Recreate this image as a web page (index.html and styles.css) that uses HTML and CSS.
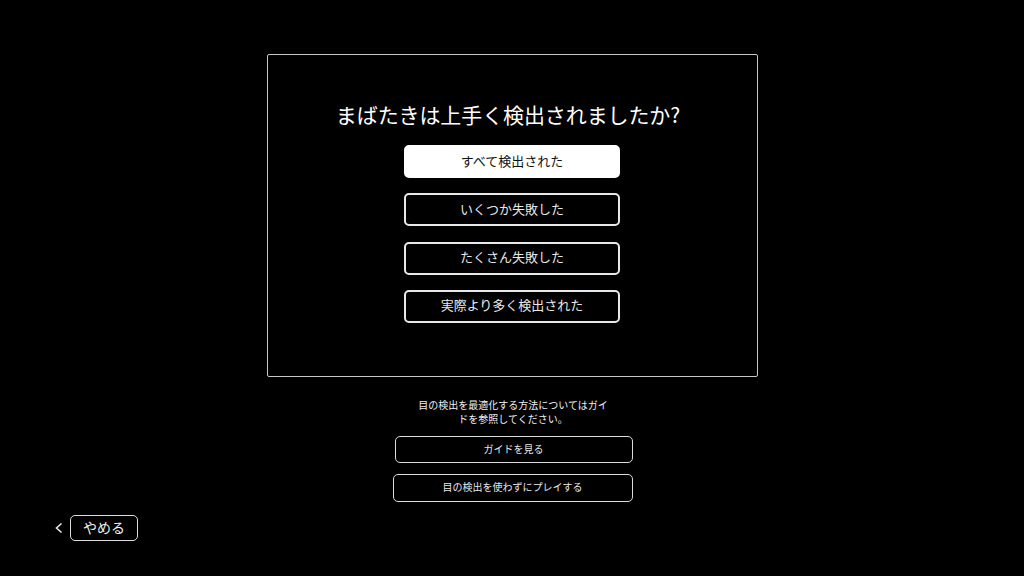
FILE: index.html
```html
<!DOCTYPE html>
<html lang="ja">
<head>
    <meta charset="UTF-8">
    <meta name="viewport" content="width=device-width, initial-scale=1.0">
    <title>まばたき検出</title>
    <link rel="stylesheet" href="styles.css">
</head>
<body>
    <div class="screen">
        <div class="panel">
            <h2 class="question">まばたきは上手く検出されましたか?</h2>
            <div class="choices">
                <button class="choice selected">すべて検出された</button>
                <button class="choice">いくつか失敗した</button>
                <button class="choice">たくさん失敗した</button>
                <button class="choice">実際より多く検出された</button>
            </div>
        </div>

        <p class="hint">目の検出を最適化する方法についてはガイ<br>ドを参照してください。</p>

        <div class="links">
            <button class="link-btn guide">ガイドを見る</button>
            <button class="link-btn play">目の検出を使わずにプレイする</button>
        </div>

        <div class="footer">
            <svg class="back-arrow" width="10" height="14" viewBox="0 0 10 14">
                <polyline points="7.5,2.5 2.5,7 7.5,11.5" fill="none" stroke="#e8e8e8" stroke-width="1.6"/>
            </svg>
            <button class="quit">やめる</button>
        </div>
    </div>
</body>
</html>
```

FILE: styles.css
```css
body {
    margin: 0;
    padding: 0;
    background: #000;
    color: #fff;
    font-family: "Noto Sans CJK JP", "Noto Sans", sans-serif;
}

.screen {
    width: 1024px;
    height: 576px;
    display: flex;
    flex-direction: column;
    align-items: center;
    padding-top: 54px;
    box-sizing: border-box;
}

.panel {
    width: 491px;
    height: 323px;
    box-sizing: border-box;
    border: 1px solid #c8c8c8;
    border-radius: 2px;
    display: flex;
    flex-direction: column;
    align-items: center;
    padding-top: 44px;
}

.question {
    margin: 0 8px 0 0;
    font-size: 21px;
    font-weight: normal;
    line-height: 30px;
    letter-spacing: -0.1px;
    color: #fff;
}

.choices {
    display: flex;
    flex-direction: column;
    gap: 15.3px;
    margin-top: 16px;
}

.choice {
    width: 216px;
    height: 33px;
    box-sizing: border-box;
    border: 2px solid #e8e8e8;
    border-radius: 5px;
    background: #000;
    color: #e8e8e8;
    font-family: inherit;
    font-size: 13px;
    padding: 0 0 3px 0;
    cursor: pointer;
}

.choice.selected {
    background: #fff;
    color: #111;
    border-color: #fff;
}

.hint {
    margin: 21px 0 0 0;
    font-size: 10px;
    line-height: 14px;
    text-align: center;
    color: #f0f0f0;
    padding-left: 2px;
}

.links {
    display: flex;
    flex-direction: column;
    align-items: flex-end;
    gap: 11px;
    margin-top: 10px;
    margin-left: 1px;
}

.link-btn {
    height: 27px;
    box-sizing: border-box;
    border: 1.5px solid #dcdcdc;
    border-radius: 5px;
    background: #000;
    color: #e8e8e8;
    font-family: inherit;
    font-size: 10px;
    padding: 0 0 3px 0;
}

.link-btn.guide {
    width: 238px;
}

.link-btn.play {
    width: 240px;
    height: 28px;
}

.footer {
    align-self: flex-start;
    display: flex;
    align-items: center;
    gap: 6px;
    margin-top: 13px;
    margin-left: 54px;
}

.back-arrow {
    display: block;
}

.quit {
    width: 68px;
    height: 26px;
    box-sizing: border-box;
    border: 1.5px solid #dcdcdc;
    border-radius: 5px;
    background: #000;
    color: #f0f0f0;
    font-family: inherit;
    font-size: 14px;
    padding: 0 0 3px 0;
}
```
